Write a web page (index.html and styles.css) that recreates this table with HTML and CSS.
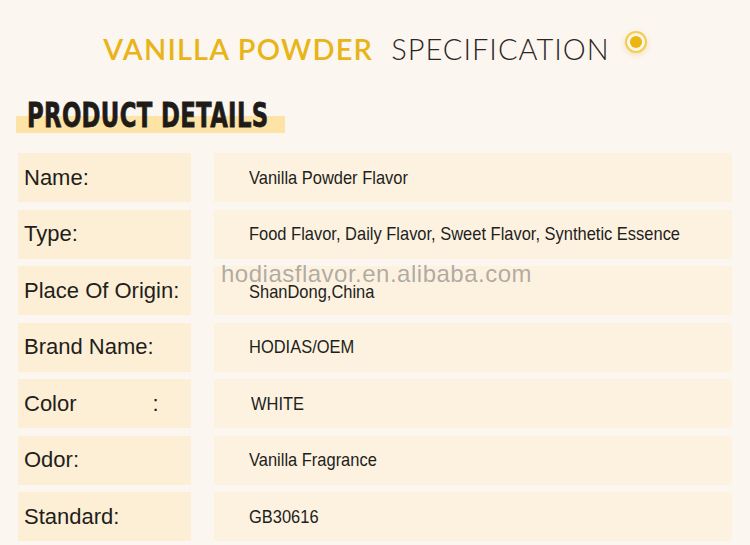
FILE: index.html
```html
<!DOCTYPE html>
<html>
<head>
<meta charset="utf-8">
<link rel="stylesheet" href="styles.css">
</head>
<body>
<div class="page">
  <header class="title">
    <span class="title-main">VANILLA POWDER</span>
    <span class="title-sub">SPECIFICATION</span>
    <span class="dot"><span class="dot-inner"></span></span>
  </header>
  <div class="section">
    <h2 class="section-title"><span class="section-text">PRODUCT DETAILS</span></h2>
  </div>
  <div class="table">
    <div class="row"><div class="label">Name:</div><div class="value"><span class="vt">Vanilla Powder Flavor</span></div></div>
    <div class="row"><div class="label">Type:</div><div class="value"><span class="vt">Food Flavor, Daily Flavor, Sweet Flavor, Synthetic Essence</span></div></div>
    <div class="row"><div class="label">Place Of Origin:</div><div class="value value-low"><span class="vt">ShanDong,China</span></div></div>
    <div class="row"><div class="label">Brand Name:</div><div class="value"><span class="vt">HODIAS/OEM</span></div></div>
    <div class="row"><div class="label">Color<span class="colon">:</span></div><div class="value value-shift"><span class="vt">WHITE</span></div></div>
    <div class="row"><div class="label">Odor:</div><div class="value"><span class="vt">Vanilla Fragrance</span></div></div>
    <div class="row"><div class="label">Standard:</div><div class="value"><span class="vt">GB30616</span></div></div>
    <div class="watermark">hodiasflavor.en.alibaba.com</div>
  </div>
</div>
</body>
</html>
```
FILE: styles.css
```css
html, body {
  margin: 0;
  padding: 0;
  background: #fcf6f0;
}
.page {
  width: 750px;
  height: 545px;
  overflow: hidden;
}
.title {
  display: flex;
  justify-content: center;
  align-items: center;
  gap: 18px;
  padding-top: 31px;
  height: 36px;
}
.title-main {
  font-family: "Lato", "Noto Sans", sans-serif;
  font-weight: 600;
  font-size: 29px;
  color: #e8b418;
  letter-spacing: 1.2px;
  line-height: 36px;
}
.title-sub {
  font-family: "Lato", "Noto Sans", sans-serif;
  font-weight: 300;
  font-size: 29px;
  color: #2b2624;
  letter-spacing: 1px;
  line-height: 36px;
}
.dot {
  width: 18px;
  height: 18px;
  border: 2px solid #f3cd52;
  border-radius: 50%;
  display: flex;
  align-items: center;
  justify-content: center;
  box-shadow: 0 2px 5px rgba(220, 180, 80, 0.35);
  background: #fff7e4;
  margin-top: -14px;
  margin-left: -3px;
}
.dot-inner {
  width: 12px;
  height: 12px;
  border-radius: 50%;
  background: #ebb512;
}
.section {
  padding: 26px 0 0 16px;
  height: 60px;
  box-sizing: border-box;
}
.section-title {
  margin: 0;
  display: inline-block;
  width: 269px;
  height: 40px;
  background: linear-gradient(to bottom, transparent 0, transparent 23px, #fde4a6 23px, #fde4a6 40px);
}
.section-text {
  display: inline-block;
  font-family: "DejaVu Sans", sans-serif;
  font-weight: bold;
  font-size: 33px;
  line-height: 40px;
  color: #1e1b19;
  -webkit-text-stroke: 0.8px #1e1b19;
  transform: translateY(3px) scaleX(0.69);
  transform-origin: left center;
  margin-left: 11px;
  white-space: nowrap;
  letter-spacing: 0.5px;
}
.table {
  position: relative;
  padding: 0 18px;
  margin-top: 26px;
  display: flex;
  flex-direction: column;
  gap: 7.5px;
}
.row {
  display: flex;
  height: 49px;
  gap: 23px;
}
.label {
  width: 173px;
  background: #fdefd5;
  font-family: "Liberation Sans", Arial, sans-serif;
  font-size: 22px;
  color: #221e1c;
  display: flex;
  align-items: center;
  padding-left: 6px;
  box-sizing: border-box;
}
.colon {
  margin-left: 76px;
}
.value {
  width: 518px;
  background: #fdf2e0;
  font-family: "Liberation Sans", Arial, sans-serif;
  font-size: 18.5px;
  color: #221e1c;
  display: flex;
  align-items: center;
  padding-left: 35px;
  box-sizing: border-box;
  white-space: nowrap;
}
.vt {
  display: inline-block;
  transform: scaleX(0.89);
  transform-origin: left center;
}
.value-low {
  padding-top: 2px;
}
.value-shift {
  padding-left: 37px;
}
.watermark {
  position: absolute;
  left: 221px;
  top: 109px;
  font-family: "Liberation Sans", Arial, sans-serif;
  font-size: 24px;
  line-height: 24px;
  color: rgba(110, 110, 110, 0.55);
  letter-spacing: 0.5px;
}
```
